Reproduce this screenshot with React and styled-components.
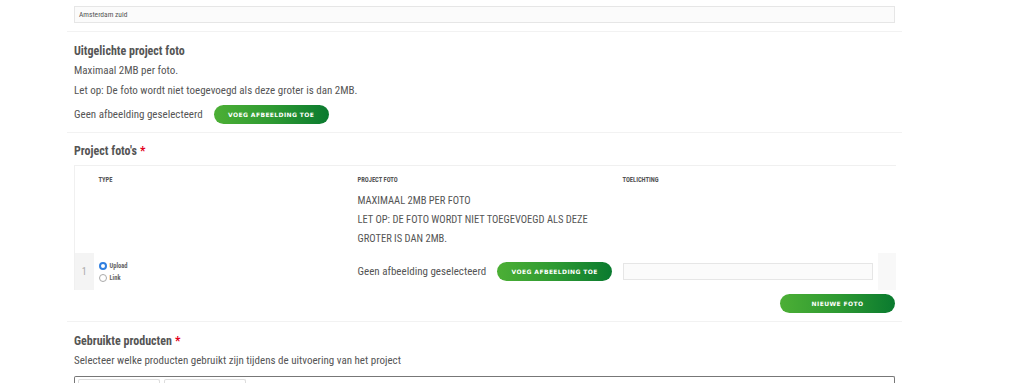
import React from 'react'
import styled, { createGlobalStyle } from 'styled-components'

const GlobalStyle = createGlobalStyle`
  body {
    margin: 0;
    background: #fff;
    font-family: "Roboto Condensed", "DejaVu Sans Condensed", "Liberation Sans", sans-serif;
    color: #555;
  }
`

const Page = styled.div`
  width: 835px;
  margin-left: 67px;
`

const Section = styled.div`
  padding: ${p => p.pad || '0 7px'};
  border-bottom: ${p => (p.last ? 'none' : '1px solid #f2f2f2')};
`

const TextInput = styled.div`
  box-sizing: border-box;
  height: 17px;
  width: ${p => p.width || 'auto'};
  border: 1px solid #e6e6e6;
  background: #fbfbfb;
  padding: 0 4px;
  font-size: 7.5px;
  line-height: 15px;
  color: #555;
`

const Title = styled.div`
  font-weight: bold;
  font-size: 12px;
  line-height: 20px;
  color: #555;
`

const Req = styled.span`
  color: #e3001b;
  margin-left: 3px;
`

const Line = styled.div`
  font-size: 11px;
  line-height: 20px;
  color: #555;
`

const FileRow = styled.div`
  display: flex;
  align-items: center;
  gap: 11px;
  font-size: 11px;
  color: #555;
  margin-top: ${p => p.mt || '0'};
`

const GreenButton = styled.button`
  width: 115px;
  height: 19px;
  border: none;
  border-radius: 10px;
  background: linear-gradient(90deg, #4caf35 0%, #2e9a32 50%, #0a7a2f 100%);
  color: #fff;
  font-family: "DejaVu Sans", sans-serif;
  font-weight: bold;
  font-size: 6px;
  letter-spacing: 0.4px;
  padding: 0;
`

const Table = styled.table`
  width: 100%;
  table-layout: fixed;
  border-collapse: collapse;
  margin-top: 4px;
  border-top: 1px solid #f0f0f0;
  border-left: 1px solid #f0f0f0;
`

const Th = styled.th`
  text-align: left;
  vertical-align: top;
  font-size: 6.5px;
  font-weight: bold;
  color: #555;
  padding: 10px 0 0 5px;
`

const Upper = styled.div`
  font-size: 10.5px;
  font-weight: normal;
  line-height: 19px;
  text-transform: uppercase;
  margin-top: 7px;
  padding-bottom: 5px;
`

const Td = styled.td`
  height: 37px;
  padding: ${p => p.pad || '0 0 0 5px'};
  vertical-align: middle;
  background: ${p => p.bg || 'transparent'};
  text-align: ${p => p.align || 'left'};
  font-size: 10px;
  color: #aaa;
`

const RadioGroup = styled.div`
  display: flex;
  flex-direction: column;
  gap: 4px;
`

const RadioLabel = styled.label`
  display: flex;
  align-items: center;
  gap: 3px;
  font-size: 6.5px;
  font-weight: bold;
  color: #666;
`

const Radio = styled.span`
  width: 8px;
  height: 8px;
  border-radius: 50%;
  box-sizing: border-box;
  border: ${p => (p.checked ? '2.5px solid #2f7fe0' : '1px solid #aaa')};
  background: #fff;
`

const ButtonRow = styled.div`
  display: flex;
  justify-content: flex-end;
  padding: 4px 0 8px;
`

const SelectBox = styled.div`
  margin-top: 5px;
  height: 20px;
  border: 1px solid #777;
  border-bottom: none;
  border-radius: 2px 2px 0 0;
  display: flex;
  gap: 4px;
  padding: 2px 3px 0;
`

const Chip = styled.div`
  width: 80px;
  height: 14px;
  border: 1px solid #ddd;
  border-bottom: none;
  border-radius: 2px;
`

export default function App() {
  return (
    <>
      <GlobalStyle />
      <Page>
        <Section pad="6px 7px 8px">
          <TextInput>Amsterdam zuid</TextInput>
        </Section>

        <Section pad="9px 7px 8px">
          <Title>Uitgelichte project foto</Title>
          <Line>Maximaal 2MB per foto.</Line>
          <Line>Let op: De foto wordt niet toegevoegd als deze groter is dan 2MB.</Line>
          <FileRow mt="4px">
            <span>Geen afbeelding geselecteerd</span>
            <GreenButton>VOEG AFBEELDING TOE</GreenButton>
          </FileRow>
        </Section>

        <Section pad="8px 7px 0">
          <Title>
            Project foto's<Req>*</Req>
          </Title>
          <Table>
            <colgroup>
              <col style={{ width: 19 }} />
              <col style={{ width: 259 }} />
              <col style={{ width: 265 }} />
              <col style={{ width: 260 }} />
              <col style={{ width: 18 }} />
            </colgroup>
            <thead>
              <tr>
                <Th />
                <Th>TYPE</Th>
                <Th>
                  PROJECT FOTO
                  <Upper>
                    Maximaal 2MB per foto
                    <br />
                    Let op: De foto wordt niet toegevoegd als deze groter is dan 2MB.
                  </Upper>
                </Th>
                <Th>TOELICHTING</Th>
                <Th />
              </tr>
            </thead>
            <tbody>
              <tr>
                <Td bg="#f4f4f4" align="center" pad="0">1</Td>
                <Td>
                  <RadioGroup>
                    <RadioLabel>
                      <Radio checked />
                      Upload
                    </RadioLabel>
                    <RadioLabel>
                      <Radio />
                      Link
                    </RadioLabel>
                  </RadioGroup>
                </Td>
                <Td>
                  <FileRow>
                    <span>Geen afbeelding geselecteerd</span>
                    <GreenButton>VOEG AFBEELDING TOE</GreenButton>
                  </FileRow>
                </Td>
                <Td>
                  <TextInput width="250px" />
                </Td>
                <Td bg="#f8f8f8" pad="0" />
              </tr>
            </tbody>
          </Table>
          <ButtonRow>
            <GreenButton>NIEUWE FOTO</GreenButton>
          </ButtonRow>
        </Section>

        <Section pad="9px 7px 0" last>
          <Title>
            Gebruikte producten<Req>*</Req>
          </Title>
          <Line>Selecteer welke producten gebruikt zijn tijdens de uitvoering van het project</Line>
          <SelectBox>
            <Chip />
            <Chip />
          </SelectBox>
        </Section>
      </Page>
    </>
  )
}
